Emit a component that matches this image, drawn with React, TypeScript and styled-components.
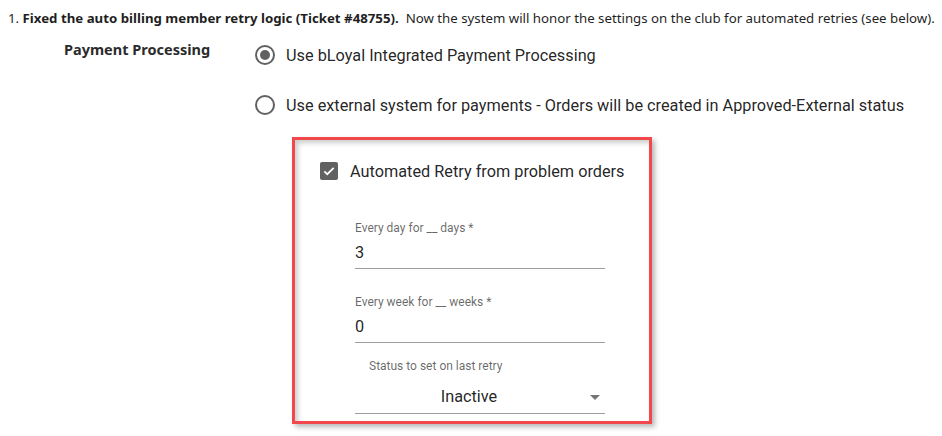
import React from "react";
import styled, { createGlobalStyle } from "styled-components";

const Global = createGlobalStyle`
  html, body { margin: 0; padding: 0; background: #ffffff; }
  body { width: 942px; height: 436px; overflow: hidden; }
`;

const Page = styled.div`
  padding: 10px 0 0 8px;
  font-family: "Noto Sans", "Open Sans", sans-serif;
  color: #1f1f1f;
`;

const Note = styled.p`
  margin: 0;
  font-size: 13.25px;
  line-height: 17px;
  white-space: nowrap;
  b { font-weight: 700; }
`;

const Section = styled.div`
  display: grid;
  grid-template-columns: 245px 1fr;
  margin-top: 12px;
`;

const SectionLabel = styled.div`
  padding: 0 0 0 56px;
  font-weight: 700;
  font-size: 14.5px;
  line-height: 20px;
  color: #2b2b2b;
`;

const Options = styled.div`
  display: flex;
  flex-direction: column;
  padding-top: 4px;
  font-family: Roboto, "Liberation Sans", sans-serif;
  color: rgba(0, 0, 0, 0.87);
`;

const RadioRow = styled.label`
  display: flex;
  align-items: center;
  gap: 9px;
  height: 24px;
  margin-bottom: 26px;
  font-size: 16.3px;
`;

const RadioIcon = ({ checked }: { checked?: boolean }) => (
  <svg width="24" height="24" viewBox="0 0 24 24">
    <circle cx="12" cy="12" r="9" fill="none" stroke="#616161" strokeWidth="2" />
    {checked && <circle cx="12" cy="12" r="5" fill="#616161" />}
  </svg>
);

const Card = styled.div`
  margin: -6px 0 0 39px;
  width: 360px;
  height: 287px;
  box-sizing: border-box;
  border: 3px solid #f2474b;
  background: #fff;
  box-shadow: 3px 3px 5px rgba(0, 0, 0, 0.28), inset 3px 3px 5px rgba(0, 0, 0, 0.2);
  display: flex;
  flex-direction: column;
  padding: 22px 0 0 25px;
`;

const CheckRow = styled.label`
  display: flex;
  align-items: center;
  gap: 12px;
  height: 18px;
  font-size: 16.3px;
`;

const CheckBox = styled.span`
  width: 18px;
  height: 18px;
  border-radius: 2px;
  background: #616161;
  display: flex;
  align-items: center;
  justify-content: center;
`;

const Fields = styled.div`
  display: flex;
  flex-direction: column;
  margin: 41px 0 0 35px;
  width: 250px;
`;

const Field = styled.div<{ $gap?: number }>`
  display: flex;
  flex-direction: column;
  border-bottom: 1px solid #9e9e9e;
  margin-bottom: ${(p) => p.$gap ?? 0}px;
`;

const FieldLabel = styled.span<{ $indent?: number }>`
  font-size: 12px;
  line-height: 14px;
  color: rgba(0, 0, 0, 0.6);
  padding-left: ${(p) => p.$indent ?? 0}px;
`;

const FieldValue = styled.span`
  font-size: 16.3px;
  line-height: 20px;
  padding: 8px 0 5px;
`;

const SelectValue = styled.div`
  display: flex;
  align-items: center;
  height: 24px;
  font-size: 16.3px;
  line-height: 20px;
  padding: 12px 0 4px;
  span { flex: 1; text-align: center; }
  svg { margin-right: -2px; }
`;

export default function App() {
  return (
    <>
      <Global />
      <Page>
        <Note>
          1. <b>Fixed the auto billing member retry logic (Ticket #48755).</b>&nbsp; Now the system will honor the settings on the club for automated retries (see below).
        </Note>
        <Section>
          <SectionLabel>Payment Processing</SectionLabel>
          <Options>
            <RadioRow>
              <RadioIcon checked />
              Use bLoyal Integrated Payment Processing
            </RadioRow>
            <RadioRow>
              <RadioIcon />
              Use external system for payments - Orders will be created in Approved-External status
            </RadioRow>
            <Card>
              <CheckRow>
                <CheckBox>
                  <svg width="14" height="14" viewBox="0 0 24 24">
                    <path d="M4 12.5l5 5L20 6.5" fill="none" stroke="#fff" strokeWidth="3" />
                  </svg>
                </CheckBox>
                Automated Retry from problem orders
              </CheckRow>
              <Fields>
                <Field $gap={26}>
                  <FieldLabel>Every day for __ days *</FieldLabel>
                  <FieldValue>3</FieldValue>
                </Field>
                <Field $gap={16}>
                  <FieldLabel>Every week for __ weeks *</FieldLabel>
                  <FieldValue>0</FieldValue>
                </Field>
                <FieldLabel $indent={14}>Status to set on last retry</FieldLabel>
                <Field>
                  <SelectValue>
                    <span>Inactive</span>
                    <svg width="24" height="24" viewBox="0 0 24 24">
                      <path d="M7 10l5 5 5-5z" fill="#757575" />
                    </svg>
                  </SelectValue>
                </Field>
              </Fields>
            </Card>
          </Options>
        </Section>
      </Page>
    </>
  );
}
